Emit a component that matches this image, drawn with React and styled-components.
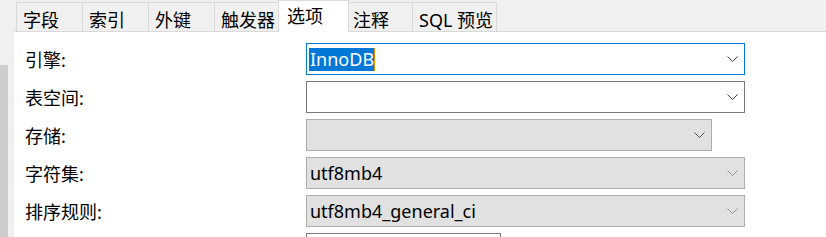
import React from "react";
import styled, { createGlobalStyle } from "styled-components";

const GlobalStyle = createGlobalStyle`
  html, body {
    margin: 0;
    padding: 0;
    background: #f0f0f0;
  }
  body {
    font-family: "Noto Sans", "Noto Sans CJK SC", sans-serif;
    font-size: 18px;
    color: #000;
  }
`;

const Window = styled.div`
  display: flex;
  width: 826px;
  height: 237px;
  overflow: hidden;
  background: #f0f0f0;
`;

const Gutter = styled.div`
  flex: none;
  width: 14px;
  display: flex;
  flex-direction: column;
`;

const SplitterBar = styled.div`
  margin-top: 65px;
  width: 8px;
  flex: 1;
  background: #cdcdcd;
`;

const Main = styled.div`
  flex: 1;
  display: flex;
  flex-direction: column;
  min-width: 0;
`;

const TabStrip = styled.div`
  display: flex;
  align-items: flex-end;
  height: 32px;
  padding-left: 2px;
`;

const Tab = styled.div`
  position: relative;
  box-sizing: border-box;
  min-width: ${({ $active }) => ($active ? "71px" : "67px")};
  height: ${({ $active }) => ($active ? "32px" : "29px")};
  margin-bottom: ${({ $active }) => ($active ? "-1px" : "0")};
  margin-left: ${({ $active, $first }) => ($active ? "-3px" : $first ? "0" : "-1px")};
  margin-right: ${({ $active }) => ($active ? "-2px" : "0")};
  padding: ${({ $active }) => ($active ? "6px 5px 0 8px" : "8px 3px 0 6px")};
  border: 1px solid #d9d9d9;
  border-bottom: none;
  background: ${({ $active }) => ($active ? "#ffffff" : "#f0f0f0")};
  z-index: ${({ $active }) => ($active ? 2 : 1)};
  font-size: 18px;
  line-height: 18px;
  white-space: nowrap;
`;

const Pane = styled.div`
  flex: 1;
  display: flex;
  flex-direction: column;
  gap: 6px;
  padding: 11px 0 0 11px;
  background: #ffffff;
  border-top: 1px solid #d9d9d9;
`;

const Row = styled.div`
  display: flex;
  align-items: center;
  height: 32px;
  flex: none;
`;

const Label = styled.div`
  flex: none;
  width: 281px;
  font-size: 18px;
`;

const selectColors = {
  focused: { border: "#0078d7", bg: "#ffffff", arrow: "#404040" },
  normal: { border: "#7a7a7a", bg: "#ffffff", arrow: "#404040" },
  disabled: { border: "#adadad", bg: "#e1e1e1", arrow: "#505050" },
  readonly: { border: "#adadad", bg: "#e1e1e1", arrow: "#909090" },
};

const SelectBox = styled.div`
  box-sizing: border-box;
  width: ${({ $width }) => $width}px;
  height: 32px;
  display: flex;
  align-items: center;
  justify-content: space-between;
  padding: 0 6px 0 2px;
  border: 1px solid ${({ $variant }) => selectColors[$variant].border};
  background: ${({ $variant }) => selectColors[$variant].bg};
`;

const Value = styled.span`
  padding-left: 1px;
  font-size: 18px;
  line-height: 23px;
  white-space: nowrap;
`;

const Selected = styled.span`
  display: inline-block;
  height: 23px;
  padding: 0 0 0 1px;
  font-size: 18px;
  line-height: 23px;
  color: #ffffff;
  background: #0078d7;
  border-right: 1px solid #f28b00;
`;

const Chevron = ({ color }) => (
  <svg width="11" height="6" viewBox="0 0 11 6" style={{ flex: "none" }}>
    <polyline
      points="0.5,0.5 5.5,5.5 10.5,0.5"
      fill="none"
      stroke={color}
      strokeWidth="1"
    />
  </svg>
);

function Select({ variant, width, children, selected }) {
  return (
    <SelectBox $variant={variant} $width={width}>
      {selected ? <Selected>{children}</Selected> : <Value>{children}</Value>}
      <Chevron color={selectColors[variant].arrow} />
    </SelectBox>
  );
}

const tabs = ["字段", "索引", "外键", "触发器", "选项", "注释", "SQL 预览"];

const rows = [
  { label: "引擎:", value: "InnoDB", variant: "focused", width: 439, selected: true },
  { label: "表空间:", value: "", variant: "normal", width: 439 },
  { label: "存储:", value: "", variant: "disabled", width: 406 },
  { label: "字符集:", value: "utf8mb4", variant: "readonly", width: 439 },
  { label: "排序规则:", value: "utf8mb4_general_ci", variant: "readonly", width: 439 },
];

const PlainBox = styled.div`
  box-sizing: border-box;
  width: 195px;
  height: 32px;
  border: 1px solid #7a7a7a;
  background: #ffffff;
`;

export default function App() {
  return (
    <>
      <GlobalStyle />
      <Window>
        <Gutter>
          <SplitterBar />
        </Gutter>
        <Main>
          <TabStrip>
            {tabs.map((t, i) => (
              <Tab key={t} $first={i === 0} $active={t === "选项"}>
                {t}
              </Tab>
            ))}
          </TabStrip>
          <Pane>
            {rows.map((r) => (
              <Row key={r.label}>
                <Label>{r.label}</Label>
                <Select variant={r.variant} width={r.width} selected={r.selected}>
                  {r.value}
                </Select>
              </Row>
            ))}
            <Row>
              <Label />
              <PlainBox />
            </Row>
          </Pane>
        </Main>
      </Window>
    </>
  );
}
